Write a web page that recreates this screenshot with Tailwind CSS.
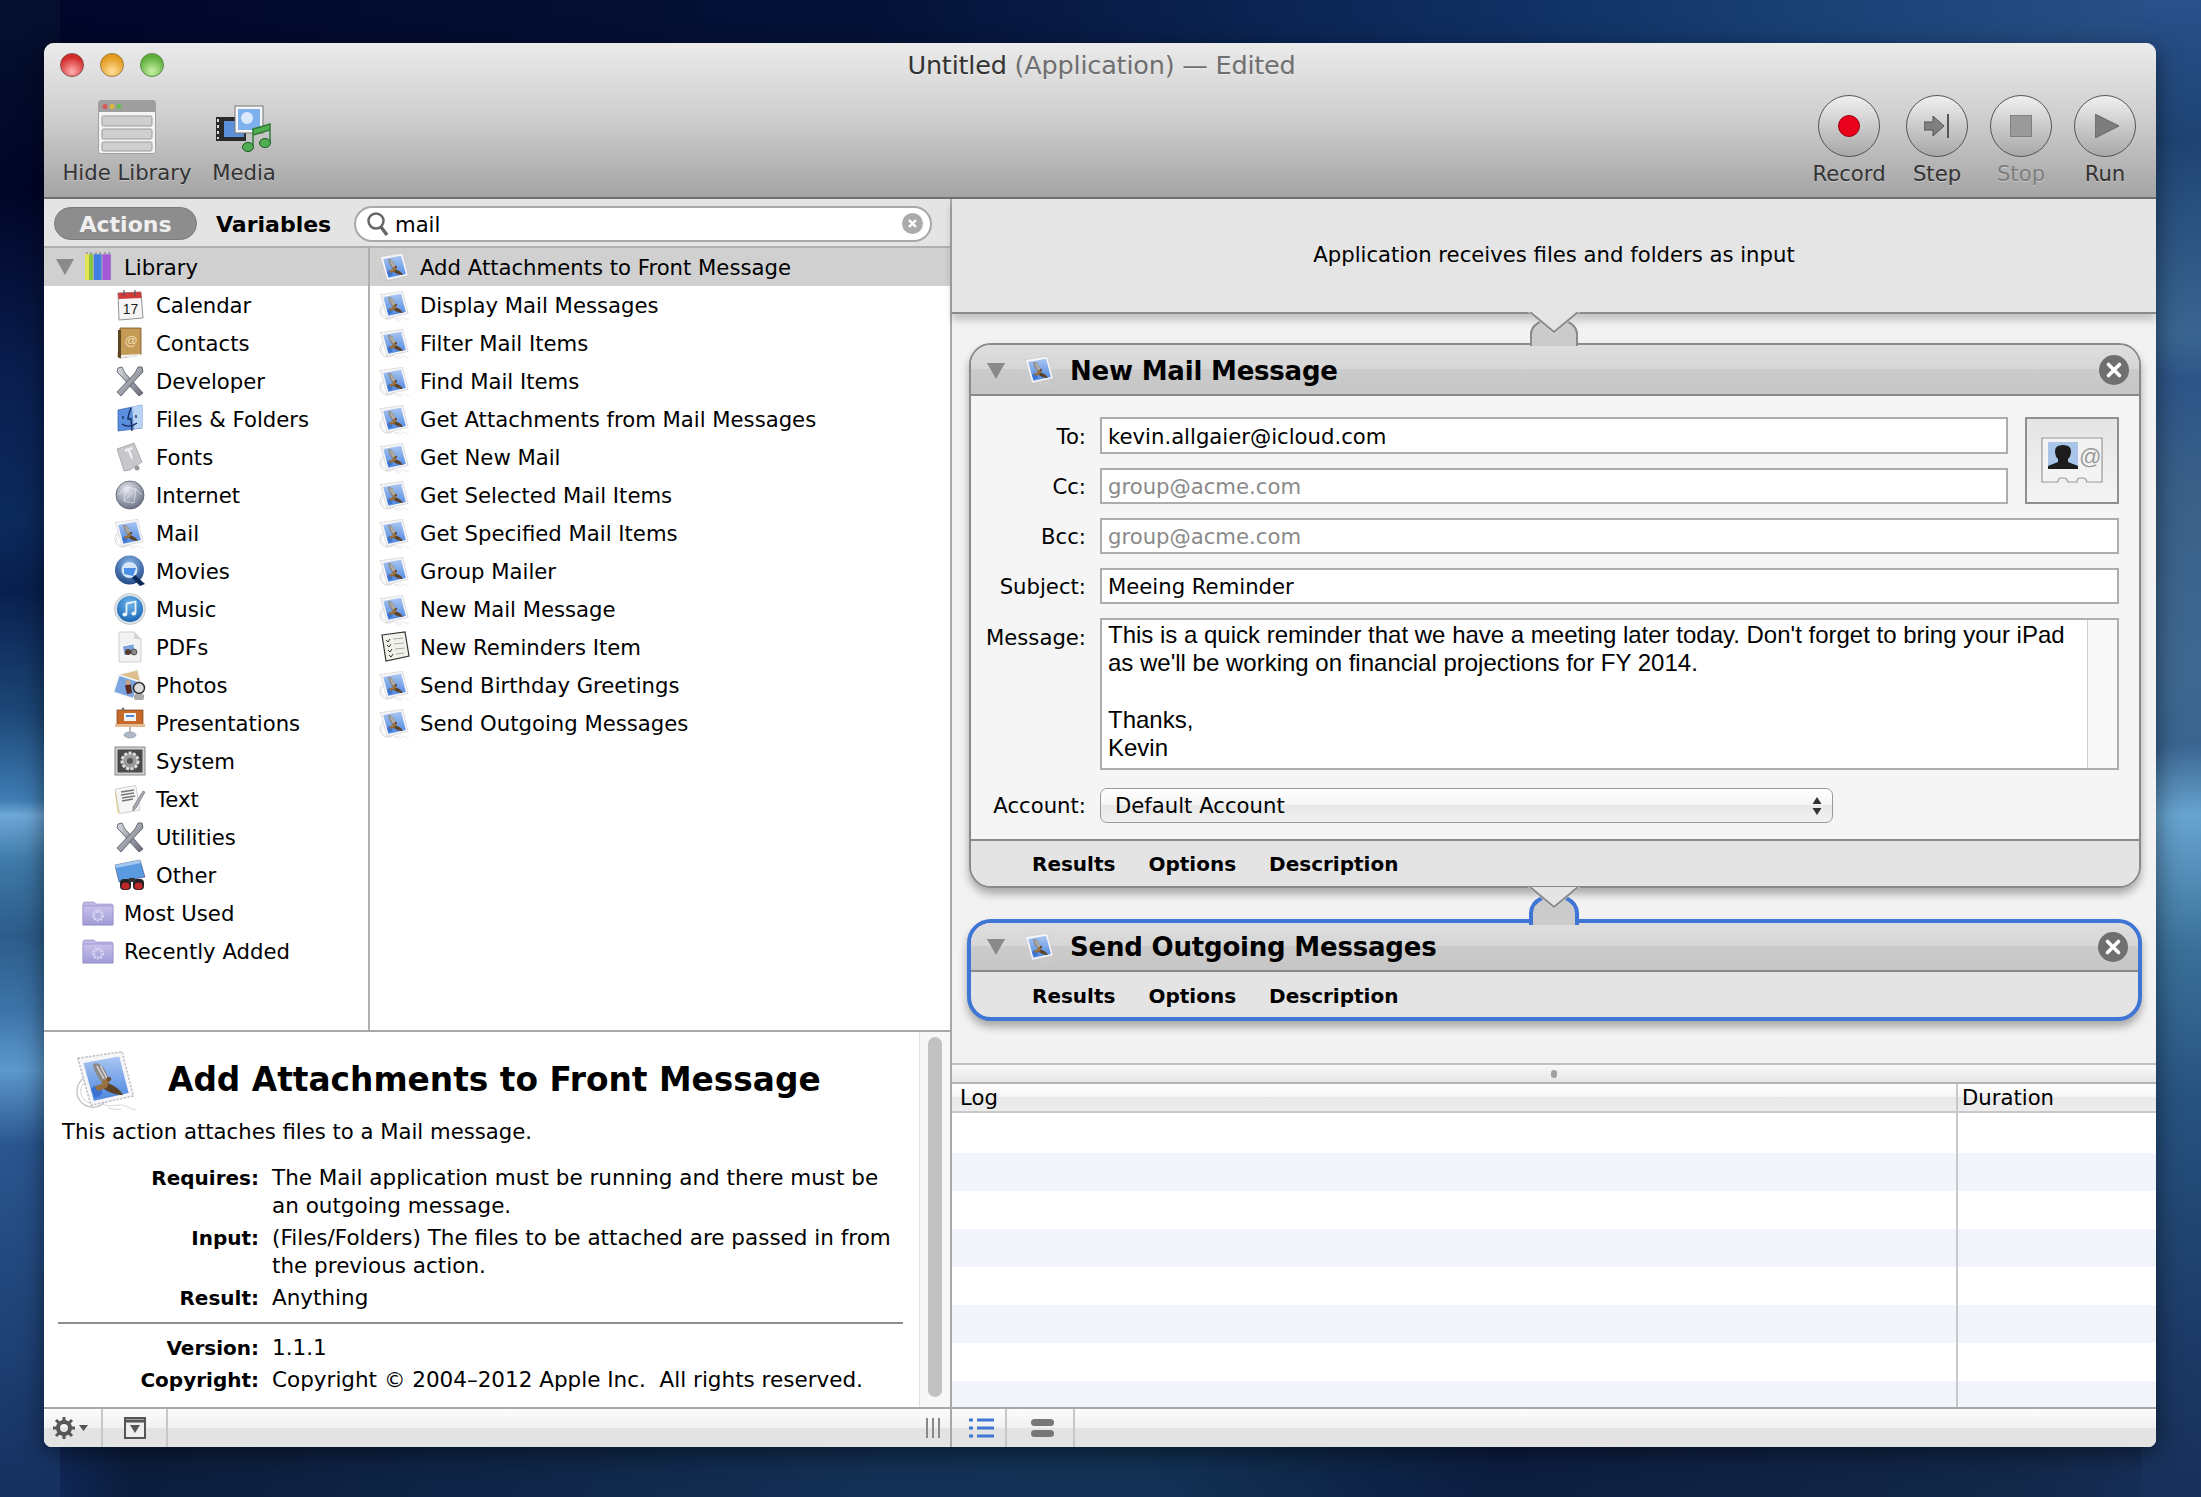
<!DOCTYPE html>
<html>
<head>
<meta charset="utf-8">
<script src="https://cdn.jsdelivr.net/npm/@tailwindcss/browser@4"></script>
</head>
<body class="m-0">
<svg class="absolute w-0 h-0" aria-hidden="true">
<defs>
<linearGradient id="gBlue" x1="0" y1="0" x2="0" y2="1"><stop offset="0" stop-color="#a9c6f2"/><stop offset="1" stop-color="#4d86e0"/></linearGradient>
<linearGradient id="gSilver" x1="0" y1="0" x2="1" y2="1"><stop offset="0" stop-color="#d8dadf"/><stop offset="1" stop-color="#666a75"/></linearGradient>
<linearGradient id="gPurple" x1="0" y1="0" x2="0" y2="1"><stop offset="0" stop-color="#c7c2ea"/><stop offset="1" stop-color="#a09ad6"/></linearGradient>
<radialGradient id="gGlobe" cx=".4" cy=".3" r=".8"><stop offset="0" stop-color="#e6e8f0"/><stop offset="1" stop-color="#5d6478"/></radialGradient>
<radialGradient id="gQ" cx=".5" cy=".3" r=".8"><stop offset="0" stop-color="#8bb7ec"/><stop offset="1" stop-color="#123a78"/></radialGradient>
<radialGradient id="gM" cx=".5" cy=".3" r=".8"><stop offset="0" stop-color="#6fb6ee"/><stop offset="1" stop-color="#0d5cab"/></radialGradient>
<symbol id="stamp" viewBox="5 3 68 68">
<circle cx="24" cy="50" r="17" fill="none" stroke="#c6c6c6" stroke-width="1.500"/>
<circle cx="24" cy="50" r="13" fill="none" stroke="#d2d2d2" stroke-width="1"/>
<path d="M8 15L55 8 67 55 22 65z" fill="#f6f6f8" stroke="#bdbdc4" stroke-width="1.600" stroke-dasharray="2.500 1.500"/>
<path d="M14 20L52 13 62 52 25 60z" fill="url(#gBlue)"/>
<path d="M22 48q4-6 9-3t2 9l-7 3z" fill="#3a72d4"/>
<path d="M24 21C30 18 36 24 39 32L42 40 35 43C29 36 25 28 24 21Z" fill="#8c8a88"/>
<path d="M28 23L37 39M32 23L39 36" stroke="#dcdad4" stroke-width="1.400"/>
<path d="M38 41C46 43 53 48 56 54 48 54 40 51 34 46Z" fill="#5b4226"/>
<path d="M35 37L42 38 39 46 29 50 26 45 34 42Z" fill="#96703f"/>
<circle cx="41" cy="37" r="2.500" fill="#6a5030"/>
<path d="M34 64q8 3 14 1t14 2 8 2M40 68q8 2 14 1" fill="none" stroke="#d4d4d4" stroke-width="1"/>
</symbol>
<symbol id="calendar" viewBox="0 0 32 32">
<path d="M4 4l23-1 2 26-24 2z" fill="#f5f5f5" stroke="#777" stroke-width=".8"/>
<path d="M4 4l23-1 .5 6-23 1z" fill="#cf3d3a"/>
<path d="M10 1v6M21 1v6" stroke="#555" stroke-width="1.200"/>
<text x="16.500" y="25" font-size="14" text-anchor="middle" font-family="Liberation Sans" fill="#222">17</text>
</symbol>
<symbol id="contacts" viewBox="0 0 32 32">
<path d="M6 1h21v27L6 31l-2-1z" fill="#c59a55" stroke="#6e5027" stroke-width=".8"/>
<path d="M4 3v27l3 1V3z" fill="#5f4520"/>
<path d="M7 28l20-1v2L7 31z" fill="#eee"/>
<text x="17" y="18" font-size="13" text-anchor="middle" font-family="Liberation Sans" fill="#f0dcae">@</text>
</symbol>
<symbol id="tools" viewBox="0 0 32 32">
<path d="M4 3l4-1 3 6 18 20-4 3L7 11 3 7z" fill="url(#gSilver)" stroke="#4f5260" stroke-width=".8"/>
<path d="M28 2l-4 0-3 6L3 27l4 4L25 11l4-4z" fill="url(#gSilver)" stroke="#4f5260" stroke-width=".8"/>
</symbol>
<symbol id="finder" viewBox="0 0 32 32">
<path d="M4 7l24-5v23l-24 3z" fill="#5a8fe0" stroke="#2c5ba8" stroke-width=".7"/>
<path d="M18 3.500l10-1.500v23l-8 1z" fill="#b9d3f5"/>
<path d="M17 5c-2 5-3 8-3 11h3l1 12M9 13v3M22 12v3M8 21c4 3 10 3 15-1" fill="none" stroke="#14274f" stroke-width="1.300"/>
</symbol>
<symbol id="fonts" viewBox="0 0 32 32">
<path d="M3 8l17-6 8 19-12 8-6 1z" fill="#c7c8cc" stroke="#9a9a9f" stroke-width=".7"/>
<path d="M11 8l7-2 1 2-3 1 3 8-2 1-3-8-3 1z" fill="#f1f1f1"/>
<circle cx="23" cy="27" r="2.500" fill="#999"/>
</symbol>
<symbol id="globe" viewBox="0 0 32 32">
<circle cx="16" cy="16" r="14" fill="url(#gGlobe)" stroke="#5a5f6d" stroke-width=".8"/>
<path d="M4 16l8-8 10 2 6 6M12 8l-2 14 12-12-2 14M10 22l10 2" stroke="#f0f1f5" stroke-width=".6" fill="none"/>
</symbol>
<symbol id="movies" viewBox="0 0 32 32">
<circle cx="15.500" cy="15" r="14.500" fill="url(#gQ)"/>
<circle cx="15.500" cy="15" r="8" fill="#d5e6fa"/>
<path d="M10 13h12l-3 8-9-2z" fill="#4a90e8"/>
<path d="M21 20l10 9-5 2-8-8z" fill="#0d2a5a"/>
</symbol>
<symbol id="music" viewBox="0 0 32 32">
<circle cx="16" cy="16" r="15.500" fill="#dfe3e8" stroke="#9aa" stroke-width=".5"/>
<circle cx="16" cy="16" r="13" fill="url(#gM)"/>
<path d="M12.500 10.500l9-2v11.500" fill="none" stroke="#e8f1f8" stroke-width="1.800"/>
<path d="M12.500 10.500v10.500" stroke="#e8f1f8" stroke-width="1.800"/>
<ellipse cx="10.800" cy="21.500" rx="2.400" ry="1.900" fill="#e8f1f8"/>
<ellipse cx="19.800" cy="20.500" rx="2.400" ry="1.900" fill="#e8f1f8"/>
</symbol>
<symbol id="pdf" viewBox="0 0 32 32">
<path d="M5 1h15l7 7v23H5z" fill="#f2f2f2" stroke="#bdbdbd" stroke-width=".7"/>
<path d="M20 1v7h7z" fill="#d5d5d5"/>
<rect x="9" y="14" width="12" height="10" transform="rotate(-12 14 19)" fill="#7ea5da" stroke="#fff"/>
<circle cx="14" cy="21" r="3" fill="#5a3a2a"/>
<circle cx="20" cy="21" r="3" fill="#888" stroke="#333" stroke-width=".7"/>
</symbol>
<symbol id="photos" viewBox="0 0 32 32">
<rect x="5" y="3" width="21" height="15" transform="rotate(-14 15 11)" fill="#dcc08f" stroke="#f5f5f5" stroke-width="1.500"/>
<rect x="2" y="9" width="21" height="18" transform="rotate(18 13 17)" fill="#7aa5e0" stroke="#f5f5f5" stroke-width="1.500"/>
<path d="M11 17l3-3 3 2 1 8-5 1z" fill="#5a2d20"/>
<circle cx="14" cy="13.500" r="2.500" fill="#d1a084"/>
<circle cx="25" cy="19" r="5.500" fill="#ddd" stroke="#333" stroke-width="1.500"/>
<rect x="20" y="25" width="10" height="6" rx="2" fill="#aaa"/>
</symbol>
<symbol id="keynote" viewBox="0 0 32 32">
<rect x="3" y="3" width="26" height="15" fill="#c8692c" stroke="#7d3c12" stroke-width=".7"/>
<rect x="1" y="17" width="30" height="3" fill="#e2bb93"/>
<rect x="10" y="6" width="12" height="8" fill="#f2f2f2"/>
<rect x="12" y="8" width="8" height="2" fill="#4a88d8"/>
<rect x="15" y="20" width="2" height="7" fill="#bbb"/>
<ellipse cx="16" cy="28" rx="6" ry="3" fill="#aeb8cc" stroke="#777" stroke-width=".5"/>
<circle cx="9" cy="2" r="1.500" fill="#777"/>
</symbol>
<symbol id="system" viewBox="0 0 32 32">
<rect x="1" y="2" width="30" height="28" fill="#d0d0d0" stroke="#8a8a8a"/>
<rect x="3.500" y="4.500" width="25" height="23" fill="#4a4a4a"/>
<circle cx="16" cy="16" r="8" fill="#9a9a9a" stroke="#dcdcdc" stroke-width="3" stroke-dasharray="3 1.500"/>
<circle cx="16" cy="16" r="3" fill="#555"/>
</symbol>
<symbol id="textdoc" viewBox="0 0 32 32">
<rect x="2" y="8" width="18" height="21" transform="rotate(-8 12 18)" fill="#e8d98a"/>
<rect x="3" y="4" width="21" height="25" transform="rotate(-10 14 16)" fill="#f5f5f5" stroke="#bbb" stroke-width=".6"/>
<path d="M7 9l13-2M7 12l13-2M8 15l13-2M8 18l11-2" stroke="#777" stroke-width="1.500"/>
<path d="M29 8l2 1-9 16-3 3 0-4z" fill="#a8abb3" stroke="#555" stroke-width=".5"/>
</symbol>
<symbol id="binoc" viewBox="0 0 32 32">
<path d="M1 6l25-5 5 17-26 5z" fill="#5a9ae0" stroke="#336" stroke-width=".5"/>
<path d="M1 6l25-5 .8 3L2 9z" fill="#a3c8ee"/>
<rect x="6" y="20" width="11" height="11" rx="4" fill="#222"/>
<rect x="19" y="20" width="11" height="11" rx="4" fill="#222"/>
<ellipse cx="11.500" cy="27" rx="4" ry="3.500" fill="#c02828"/>
<ellipse cx="24.500" cy="27" rx="4" ry="3.500" fill="#c02828"/>
<rect x="15" y="19" width="6" height="4" fill="#333"/>
</symbol>
<symbol id="folder" viewBox="0 0 32 32">
<path d="M1 7q0-2 2-2h9l2 2h15q2 0 2 2v19H1z" fill="#bfb9e6" stroke="#8b85c2" stroke-width=".6"/>
<rect x="1" y="9" width="30" height="19" fill="url(#gPurple)" stroke="#8b85c2" stroke-width=".6"/>
<circle cx="16" cy="18.500" r="4.500" fill="none" stroke="#d7d4f2" stroke-width="3" stroke-dasharray="2 1"/>
</symbol>
<symbol id="books" viewBox="0 0 32 32">
<rect x="2" y="3" width="8.500" height="27" fill="#8cc63f" stroke="#bcbcbc" stroke-width=".6"/>
<rect x="2" y="3" width="4" height="27" fill="#e3e35a"/>
<rect x="10.500" y="3" width="8.500" height="27" fill="#3e7fe0" stroke="#bcbcbc" stroke-width=".6"/>
<rect x="19" y="3" width="9" height="27" fill="#a45ad8" stroke="#bcbcbc" stroke-width=".6"/>
<path d="M4 3V1M8 3V1M13 3V1M17 3V1M22 3V1M26 3V1" stroke="#777" stroke-width="1"/>
<rect x="1" y="29" width="29" height="2" fill="#d0d0d0"/>
</symbol>
<symbol id="remind" viewBox="0 0 32 32">
<path d="M3 4l23-3 4 24-23 5z" fill="#f3f2ea" stroke="#333" stroke-width="1.200"/>
<path d="M7 9l2 2 2-3M8 14l2 2 2-3M9 19l2 2 2-3M10 24l2 2 2-3" fill="none" stroke="#333" stroke-width="1"/>
<path d="M14 8l10-1M15 13l10-1M16 18l10-1M17 23l8-1" stroke="#aaa" stroke-width="1"/>
</symbol>
<symbol id="xdark" viewBox="0 0 30 30">
<circle cx="15" cy="15" r="15" fill="#6f6f6f"/>
<path d="M9.500 9.500l11 11M20.500 9.500l-11 11" stroke="#fff" stroke-width="3.600" stroke-linecap="round"/>
</symbol>
<symbol id="tri" viewBox="0 0 18 16"><path d="M0 0h18L9 16z" fill="#8a8a8a"/></symbol>
</defs>
</svg>

<div class="relative w-[2201px] h-[1497px] overflow-hidden pt-[43px] pl-[44px] font-['DejaVu_Sans',sans-serif] text-[21.200px] text-black bg-[#0d2244]">
<!-- desktop wallpaper -->
<div class="absolute left-0 right-0 top-0 h-[60px] bg-[linear-gradient(to_right,#01062a_0%,#051238_40%,#0f2f62_68%,#1c4478_85%,#2a5288_100%)]"></div>
<div class="absolute left-0 right-0 bottom-0 h-[60px] bg-[linear-gradient(to_right,#12306a_0%,#0c1c3c_6%,#133055_40%,#123255_52%,#0c1d40_68%,#13284a_92%,#17305c_100%)]"></div>
<div class="absolute left-0 top-0 bottom-0 w-[60px] bg-[linear-gradient(#05102f_0,#010528_190px,#0a1f50_380px,#0c2a5c_520px,#081f4e_590px,#1d4878_715px,#3f7db4_800px,#6fa8d8_815px,#3f7aa8_860px,#2c5c8a_935px,#3d74a8_1010px,#5c98cc_1070px,#2a568f_1145px,#15305f_1497px)]"></div>
<div class="absolute right-0 top-0 bottom-0 w-[60px] bg-[linear-gradient(#28508a_0,#1f4474_140px,#3a6590_335px,#2e5588_380px,#3a6088_495px,#3f6890_670px,#3a6590_745px,#68a4d0_815px,#3a7098_950px,#27527f_1100px,#1c3a66_1340px,#17305a_1497px)]"></div>

<div class="relative w-[2112px] h-[1404px] flex flex-col rounded-t-[10px] rounded-b-[8px] overflow-hidden shadow-[0_6px_24px_rgba(0,0,0,0.5)] bg-[#e4e4e4]">

<!-- toolbar -->
<div class="h-[156px] shrink-0 flex flex-col bg-linear-to-b from-[#ebebeb] via-[#cdcdcd] to-[#a4a4a4] border-b-[2px] border-[#6e6e6e] text-[#333] [text-shadow:0_1px_0_rgba(255,255,255,0.35)]">
 <div class="grid grid-cols-[1fr_auto_1fr] items-center h-[44px]">
  <div class="flex gap-[16px] pl-[16px]">
   <span class="w-[24px] h-[24px] rounded-full border border-[#8c4a4a] bg-[radial-gradient(circle_at_50%_80%,#ffb0b0,#d42a2a_70%)]"></span>
   <span class="w-[24px] h-[24px] rounded-full border border-[#9c7b3a] bg-[radial-gradient(circle_at_50%_80%,#ffe09a,#e39a1e_70%)]"></span>
   <span class="w-[24px] h-[24px] rounded-full border border-[#5a8a4a] bg-[radial-gradient(circle_at_50%_80%,#c9f2a8,#5fae3a_70%)]"></span>
  </div>
  <div class="ml-[3px] text-[25.500px] tracking-[-0.2px] whitespace-nowrap text-[#333]">Untitled <span class="text-[#6f6f6f]">(Application) — Edited</span></div>
  <div></div>
 </div>
 <div class="flex-1 flex justify-between pl-[18px] pr-[20px]">
  <div class="flex gap-[20px]">
   <div class="w-[130px] flex flex-col items-center">
    <svg class="w-[58px] h-[54px] mt-[13px]" viewBox="0 0 58 54">
     <rect x=".5" y=".5" width="57" height="53" rx="2" fill="#f4f4f4" stroke="#a0a0a0"/>
     <rect x="1" y="1" width="56" height="11" fill="#9e9e9e"/>
     <circle cx="7" cy="6.500" r="2.500" fill="#d55"/><circle cx="14" cy="6.500" r="2.500" fill="#db3"/><circle cx="21" cy="6.500" r="2.500" fill="#6b5"/>
     <rect x="4" y="16" width="50" height="10" rx="1.500" fill="#cfcfcf" stroke="#999"/>
     <rect x="4" y="29" width="50" height="10" rx="1.500" fill="#cfcfcf" stroke="#999"/>
     <rect x="4" y="42" width="50" height="9" rx="1.500" fill="#cfcfcf" stroke="#999"/>
    </svg>
    <span class="mt-[3px] whitespace-nowrap">Hide Library</span>
   </div>
   <div class="w-[64px] flex flex-col items-center">
    <svg class="w-[58px] h-[48px] mt-[18px]" viewBox="0 0 58 48">
     <rect x="1" y="12" width="30" height="24" fill="#2a2a2a"/>
     <path d="M3 14v3M3 20v3M3 26v3M3 32v2" stroke="#ddd" stroke-width="2"/>
     <rect x="9" y="16" width="20" height="16" fill="#5c8fd8"/>
     <rect x="20" y="1" width="28" height="27" fill="#f5f5f5" stroke="#777"/>
     <rect x="23" y="4" width="22" height="21" fill="#7fb0ee"/>
     <circle cx="32" cy="13" r="6" fill="#d9e9fb"/>
     <path d="M38 24v18M55 20v18M38 24l17-5v6l-17 5z" fill="#4fae52" stroke="#2f7a35" stroke-width="1.500"/>
     <ellipse cx="33" cy="42" rx="5.500" ry="4.500" fill="#4fae52" stroke="#1f5a25"/>
     <ellipse cx="50" cy="38" rx="5.500" ry="4.500" fill="#4fae52" stroke="#1f5a25"/>
    </svg>
    <span class="mt-[4px] whitespace-nowrap">Media</span>
   </div>
  </div>
  <div class="flex gap-[22px]">
   <div class="w-[62px] flex flex-col items-center mr-[4px]">
    <div class="w-[62px] h-[62px] mt-[8px] rounded-full border border-[#555] bg-linear-to-b from-[#f0f0f0] to-[#a8a8a8] flex items-center justify-center">
     <span class="w-[22px] h-[22px] rounded-full bg-[#e8001c] border border-[#9a0010]"></span>
    </div>
    <span class="mt-[1px] whitespace-nowrap">Record</span>
   </div>
   <div class="w-[62px] flex flex-col items-center">
    <div class="w-[62px] h-[62px] mt-[8px] rounded-full border border-[#555] bg-linear-to-b from-[#f0f0f0] to-[#a8a8a8] flex items-center justify-center">
     <svg class="w-[26px] h-[24px]" viewBox="0 0 26 24"><path d="M0 8h9V2l11 10-11 10v-6H0z" fill="#808080" stroke="#555"/><rect x="23" y="0" width="2" height="24" fill="#555"/></svg>
    </div>
    <span class="mt-[1px] whitespace-nowrap">Step</span>
   </div>
   <div class="w-[62px] flex flex-col items-center">
    <div class="w-[62px] h-[62px] mt-[8px] rounded-full border border-[#555] bg-linear-to-b from-[#f0f0f0] to-[#a8a8a8] flex items-center justify-center">
     <span class="w-[22px] h-[22px] bg-[#9a9a9a] border border-[#808080]"></span>
    </div>
    <span class="mt-[1px] whitespace-nowrap text-[#7e7e7e]">Stop</span>
   </div>
   <div class="w-[62px] flex flex-col items-center">
    <div class="w-[62px] h-[62px] mt-[8px] rounded-full border border-[#555] bg-linear-to-b from-[#f0f0f0] to-[#a8a8a8] flex items-center justify-center">
     <svg class="w-[24px] h-[24px] ml-[3px]" viewBox="0 0 24 24"><path d="M0 0l24 12L0 24z" fill="#7d7d7d" stroke="#666"/></svg>
    </div>
    <span class="mt-[1px] whitespace-nowrap">Run</span>
   </div>
  </div>
 </div>
</div>

<!-- main -->
<div class="flex-1 flex min-h-0">

<!-- left pane -->
<div class="w-[908px] shrink-0 flex flex-col bg-white border-r-[2px] border-[#a8a8a8]">
 <div class="h-[49px] shrink-0 flex items-center bg-[#e4e4e4] border-b-[2px] border-[#b0b0b0] pl-[10px] pr-[18px] pt-[2px]">
  <div class="w-[143px] h-[33px] rounded-full bg-[#8d8d8d] border border-[#7a7a7a] flex items-center justify-center text-[#efefef] font-bold text-[22px] pt-[1px]">Actions</div>
  <div class="ml-[19px] w-[120px] font-bold text-[22px] whitespace-nowrap pt-[2px]">Variables</div>
  <div class="ml-[18px] flex-1 h-[36px] rounded-full border-[2px] border-[#a9a9a9] bg-white flex items-center pl-[10px] pr-[7px]">
   <svg class="w-[24px] h-[26px]" viewBox="0 0 24 26"><circle cx="10" cy="10" r="7.500" fill="none" stroke="#666" stroke-width="2.500"/><path d="M15 16l6 8" stroke="#666" stroke-width="3.500"/></svg>
   <span class="ml-[5px] flex-1 pt-[2px]">mail</span>
   <svg class="w-[21px] h-[21px]" viewBox="0 0 30 30"><circle cx="15" cy="15" r="15" fill="#ababab"/><path d="M10 10l10 10M20 10L10 20" stroke="#fff" stroke-width="3.500"/></svg>
  </div>
 </div>
 <div class="flex-1 flex min-h-0">
  <!-- library list -->
  <div class="w-[326px] shrink-0 border-r-[2px] border-[#b0b0b0]">
   <div class="h-[38px] bg-[#d0d0d0] flex items-center pl-[12px]">
    <svg class="w-[18px] h-[16px]"><use href="#tri"/></svg>
    <svg class="w-[32px] h-[32px] ml-[9px]"><use href="#books"/></svg>
    <span class="ml-[9px] pt-[2px]">Library</span>
   </div>
   <div class="h-[38px] flex items-center pl-[70px]"><svg class="w-[32px] h-[32px]"><use href="#calendar"/></svg><span class="ml-[10px] pt-[2px]">Calendar</span></div>
   <div class="h-[38px] flex items-center pl-[70px]"><svg class="w-[32px] h-[32px]"><use href="#contacts"/></svg><span class="ml-[10px] pt-[2px]">Contacts</span></div>
   <div class="h-[38px] flex items-center pl-[70px]"><svg class="w-[32px] h-[32px]"><use href="#tools"/></svg><span class="ml-[10px] pt-[2px]">Developer</span></div>
   <div class="h-[38px] flex items-center pl-[70px]"><svg class="w-[32px] h-[32px]"><use href="#finder"/></svg><span class="ml-[10px] pt-[2px]">Files &amp; Folders</span></div>
   <div class="h-[38px] flex items-center pl-[70px]"><svg class="w-[32px] h-[32px]"><use href="#fonts"/></svg><span class="ml-[10px] pt-[2px]">Fonts</span></div>
   <div class="h-[38px] flex items-center pl-[70px]"><svg class="w-[32px] h-[32px]"><use href="#globe"/></svg><span class="ml-[10px] pt-[2px]">Internet</span></div>
   <div class="h-[38px] flex items-center pl-[70px]"><svg class="w-[32px] h-[32px]"><use href="#stamp"/></svg><span class="ml-[10px] pt-[2px]">Mail</span></div>
   <div class="h-[38px] flex items-center pl-[70px]"><svg class="w-[32px] h-[32px]"><use href="#movies"/></svg><span class="ml-[10px] pt-[2px]">Movies</span></div>
   <div class="h-[38px] flex items-center pl-[70px]"><svg class="w-[32px] h-[32px]"><use href="#music"/></svg><span class="ml-[10px] pt-[2px]">Music</span></div>
   <div class="h-[38px] flex items-center pl-[70px]"><svg class="w-[32px] h-[32px]"><use href="#pdf"/></svg><span class="ml-[10px] pt-[2px]">PDFs</span></div>
   <div class="h-[38px] flex items-center pl-[70px]"><svg class="w-[32px] h-[32px]"><use href="#photos"/></svg><span class="ml-[10px] pt-[2px]">Photos</span></div>
   <div class="h-[38px] flex items-center pl-[70px]"><svg class="w-[32px] h-[32px]"><use href="#keynote"/></svg><span class="ml-[10px] pt-[2px]">Presentations</span></div>
   <div class="h-[38px] flex items-center pl-[70px]"><svg class="w-[32px] h-[32px]"><use href="#system"/></svg><span class="ml-[10px] pt-[2px]">System</span></div>
   <div class="h-[38px] flex items-center pl-[70px]"><svg class="w-[32px] h-[32px]"><use href="#textdoc"/></svg><span class="ml-[10px] pt-[2px]">Text</span></div>
   <div class="h-[38px] flex items-center pl-[70px]"><svg class="w-[32px] h-[32px]"><use href="#tools"/></svg><span class="ml-[10px] pt-[2px]">Utilities</span></div>
   <div class="h-[38px] flex items-center pl-[70px]"><svg class="w-[32px] h-[32px]"><use href="#binoc"/></svg><span class="ml-[10px] pt-[2px]">Other</span></div>
   <div class="h-[38px] flex items-center pl-[38px]"><svg class="w-[32px] h-[32px]"><use href="#folder"/></svg><span class="ml-[10px] pt-[2px]">Most Used</span></div>
   <div class="h-[38px] flex items-center pl-[38px]"><svg class="w-[32px] h-[32px]"><use href="#folder"/></svg><span class="ml-[10px] pt-[2px]">Recently Added</span></div>
  </div>
  <!-- action list -->
  <div class="flex-1">
   <div class="h-[38px] bg-[#d0d0d0] flex items-center pl-[9px]"><svg class="w-[32px] h-[32px]"><use href="#stamp"/></svg><span class="ml-[9px] pt-[2px]">Add Attachments to Front Message</span></div>
   <div class="h-[38px] flex items-center pl-[9px]"><svg class="w-[32px] h-[32px]"><use href="#stamp"/></svg><span class="ml-[9px] pt-[2px]">Display Mail Messages</span></div>
   <div class="h-[38px] flex items-center pl-[9px]"><svg class="w-[32px] h-[32px]"><use href="#stamp"/></svg><span class="ml-[9px] pt-[2px]">Filter Mail Items</span></div>
   <div class="h-[38px] flex items-center pl-[9px]"><svg class="w-[32px] h-[32px]"><use href="#stamp"/></svg><span class="ml-[9px] pt-[2px]">Find Mail Items</span></div>
   <div class="h-[38px] flex items-center pl-[9px]"><svg class="w-[32px] h-[32px]"><use href="#stamp"/></svg><span class="ml-[9px] pt-[2px]">Get Attachments from Mail Messages</span></div>
   <div class="h-[38px] flex items-center pl-[9px]"><svg class="w-[32px] h-[32px]"><use href="#stamp"/></svg><span class="ml-[9px] pt-[2px]">Get New Mail</span></div>
   <div class="h-[38px] flex items-center pl-[9px]"><svg class="w-[32px] h-[32px]"><use href="#stamp"/></svg><span class="ml-[9px] pt-[2px]">Get Selected Mail Items</span></div>
   <div class="h-[38px] flex items-center pl-[9px]"><svg class="w-[32px] h-[32px]"><use href="#stamp"/></svg><span class="ml-[9px] pt-[2px]">Get Specified Mail Items</span></div>
   <div class="h-[38px] flex items-center pl-[9px]"><svg class="w-[32px] h-[32px]"><use href="#stamp"/></svg><span class="ml-[9px] pt-[2px]">Group Mailer</span></div>
   <div class="h-[38px] flex items-center pl-[9px]"><svg class="w-[32px] h-[32px]"><use href="#stamp"/></svg><span class="ml-[9px] pt-[2px]">New Mail Message</span></div>
   <div class="h-[38px] flex items-center pl-[9px]"><svg class="w-[32px] h-[32px]"><use href="#remind"/></svg><span class="ml-[9px] pt-[2px]">New Reminders Item</span></div>
   <div class="h-[38px] flex items-center pl-[9px]"><svg class="w-[32px] h-[32px]"><use href="#stamp"/></svg><span class="ml-[9px] pt-[2px]">Send Birthday Greetings</span></div>
   <div class="h-[38px] flex items-center pl-[9px]"><svg class="w-[32px] h-[32px]"><use href="#stamp"/></svg><span class="ml-[9px] pt-[2px]">Send Outgoing Messages</span></div>
  </div>
 </div>
 <!-- description -->
 <div class="h-[377px] shrink-0 flex border-t-[2px] border-[#a8a8a8]">
  <div class="flex-1 pl-[14px] pr-[16px] pt-[16px]">
   <div class="flex items-center h-[62px]">
    <svg class="w-[64px] h-[64px] ml-[17px]"><use href="#stamp"/></svg>
    <span class="ml-[29px] pt-[3px] font-bold text-[32.800px] whitespace-nowrap">Add Attachments to Front Message</span>
   </div>
   <div class="ml-[4px] mt-[8px] leading-[28px]">This action attaches files to a Mail message.</div>
   <div class="grid grid-cols-[201px_1fr] gap-x-[13px] gap-y-[4px] mt-[18px] leading-[28px] text-[21.500px]">
    <div class="text-right font-bold text-[20px]">Requires:</div><div>The Mail application must be running and there must be<br>an outgoing message.</div>
    <div class="text-right font-bold text-[20px]">Input:</div><div class="whitespace-nowrap">(Files/Folders) The files to be attached are passed in from<br>the previous action.</div>
    <div class="text-right font-bold text-[20px]">Result:</div><div>Anything</div>
   </div>
   <div class="h-[2px] bg-[#8e8e8e] mt-[10px] mb-[10px]"></div>
   <div class="grid grid-cols-[201px_1fr] gap-x-[13px] gap-y-[4px] leading-[28px] text-[21.500px]">
    <div class="text-right font-bold text-[20px]">Version:</div><div>1.1.1</div>
    <div class="text-right font-bold text-[20px]">Copyright:</div><div class="whitespace-pre">Copyright © 2004–2012 Apple Inc.  All rights reserved.</div>
   </div>
  </div>
  <div class="w-[31px] shrink-0 bg-[#f7f7f7] border-l border-[#e0e0e0] pl-[8px] pt-[5px] pb-[10px]">
   <div class="w-[14px] h-full rounded-full bg-[#c2c2c2]"></div>
  </div>
 </div>
 <!-- bottom left bar -->
 <div class="h-[40px] shrink-0 flex items-stretch border-t-[2px] border-[#a8a8a8] bg-[linear-gradient(#fcfcfc,#f0f0f0_50%,#e3e3e3_50%,#e3e3e3)]">
  <div class="w-[59px] flex items-center pl-[9px] border-r-[2px] border-[#c8c8c8]">
   <svg class="w-[22px] h-[22px]" viewBox="0 0 22 22"><circle cx="11" cy="11" r="6" fill="none" stroke="#555" stroke-width="4"/><path d="M11 0v5M11 17v5M0 11h5M17 11h5M3 3l4 4M15 15l4 4M19 3l-4 4M3 19l4-4" stroke="#555" stroke-width="3"/></svg>
   <svg class="w-[9px] h-[6px] ml-[4px]" viewBox="0 0 9 6"><path d="M0 0h9L4.500 6z" fill="#555"/></svg>
  </div>
  <div class="w-[65px] flex items-center justify-center border-r-[2px] border-[#c8c8c8]">
   <svg class="w-[22px] h-[22px]" viewBox="0 0 22 22"><rect x="1" y="1" width="20" height="20" fill="#eee" stroke="#555" stroke-width="2"/><path d="M1 4h20" stroke="#555" stroke-width="3"/><path d="M6 8h10l-5 8z" fill="#555"/></svg>
  </div>
  <div class="flex-1 flex items-center justify-end pr-[9px]">
   <svg class="w-[16px] h-[20px]" viewBox="0 0 16 20"><path d="M2 0v20M8 0v20M14 0v20" stroke="#888" stroke-width="2"/></svg>
  </div>
 </div>
</div>

<!-- right pane -->
<div class="flex-1 flex flex-col min-w-0 bg-[#f2f2f2]">
 <div class="relative flex-1 min-h-0 flex flex-col">
  <div class="h-[115px] shrink-0 bg-[#e5e5e5] border-b-[2px] border-[#8a8a8a] shadow-[0_6px_8px_rgba(0,0,0,0.2)] flex items-center justify-center pb-[2px]">Application receives files and folders as input</div>

  <!-- New Mail Message card -->
  <div class="relative mt-[29px] ml-[17px] mr-[15px] h-[545px] shrink-0 flex flex-col rounded-[22px] border-[2px] border-[#8a8a8a] shadow-[0_6px_8px_rgba(0,0,0,0.3)] bg-[#f5f5f5]">
   <svg class="absolute left-[557px] top-[-33px] w-[52px] h-[34px]" viewBox="0 0 52 34">
    <path d="M3 34V22C3 16 8 11 14 9H38C44 11 49 16 49 22V34z" fill="#cbcbcb"/>
    <path d="M3 34V22C3 16 8 11 14 9M38 9C44 11 49 16 49 22V34" fill="none" stroke="#8a8a8a" stroke-width="2"/>
    <path d="M0 0L26 22 52 0z" fill="#e5e5e5"/>
    <path d="M2 0L26 20 50 0" fill="none" stroke="#8a8a8a" stroke-width="2"/>
   </svg>
   <div class="h-[51px] shrink-0 flex items-center rounded-t-[20px] bg-[linear-gradient(#dedede,#d6d6d6_50%,#cbcbcb_50%,#c6c6c6)] border-b-[2px] border-[#8a8a8a] pl-[16px] pr-[10px]">
    <svg class="w-[18px] h-[16px] mt-[2px]"><use href="#tri"/></svg>
    <svg class="w-[32px] h-[32px] ml-[19px]"><use href="#stamp"/></svg>
    <span class="ml-[14px] pt-[4px] font-bold text-[26px] flex-1 tracking-[-0.2px] whitespace-nowrap">New Mail Message</span>
    <svg class="w-[30px] h-[30px]"><use href="#xdark"/></svg>
   </div>
   <div class="flex-1 pl-[14px] pr-[20px] pt-[21px] flex flex-col">
    <div class="flex gap-[17px]">
     <div class="flex-1 flex flex-col gap-[14px]">
      <div class="flex items-center gap-[14px]"><div class="w-[101px] text-right pt-[2px]">To:</div><div class="flex-1 h-[37px] bg-white border-[2px] border-[#adadad] flex items-center pl-[6px] pt-[2px]">kevin.allgaier@icloud.com</div></div>
      <div class="flex items-center gap-[14px]"><div class="w-[101px] text-right pt-[2px]">Cc:</div><div class="flex-1 h-[36px] bg-white border-[2px] border-[#adadad] flex items-center pl-[6px] pt-[2px] text-[#8a8a8a]">group@acme.com</div></div>
     </div>
     <div class="w-[94px] h-[87px] border-[2px] border-[#8f8f8f] bg-linear-to-b from-[#e4e4e4] to-[#f4f4f4] flex items-center justify-center">
      <svg class="w-[62px] h-[48px]" viewBox="0 0 62 48">
       <path d="M1 1h60v44H46q-1-4-4-4h-3q-3 0-3 4H27q-1-4-4-4h-3q-3 0-3 4H1z" fill="#f3f3f3" stroke="#9a9a9a" stroke-width="1.200"/>
       <rect x="7" y="5" width="30" height="27" fill="#a9c5ea"/>
       <path d="M7 32v-3l10-4v-3q-3-3-3-8 0-6 8-6t8 6q0 5-3 8v3l10 4v3z" fill="#1c1c1c"/>
       <text x="49" y="27" font-size="22" font-style="italic" text-anchor="middle" font-family="Liberation Sans" fill="#9a9a9a">@</text>
      </svg>
     </div>
    </div>
    <div class="flex items-center gap-[14px] mt-[14px]"><div class="w-[101px] text-right pt-[2px]">Bcc:</div><div class="flex-1 h-[36px] bg-white border-[2px] border-[#adadad] flex items-center pl-[6px] pt-[2px] text-[#8a8a8a]">group@acme.com</div></div>
    <div class="flex items-center gap-[14px] mt-[14px]"><div class="w-[101px] text-right pt-[2px]">Subject:</div><div class="flex-1 h-[36px] bg-white border-[2px] border-[#adadad] flex items-center pl-[6px] pt-[2px]">Meeing Reminder</div></div>
    <div class="flex gap-[14px] mt-[14px]">
     <div class="w-[101px] text-right pt-[4px]">Message:</div>
     <div class="flex-1 h-[152px] bg-white border-[2px] border-[#adadad] flex font-['Liberation_Sans',sans-serif] text-[24px] leading-[28.200px]">
      <div class="flex-1 pl-[6px] pt-[1px]">This is a quick reminder that we have a meeting later today. Don't forget to bring your iPad<br>as we'll be working on financial projections for FY 2014.<br><br>Thanks,<br>Kevin</div>
      <div class="w-[30px] shrink-0 bg-[#f8f8f8] border-l border-[#d0d0d0]"></div>
     </div>
    </div>
    <div class="flex items-center gap-[14px] mt-[18px]">
     <div class="w-[101px] text-right">Account:</div>
     <div class="w-[733px] h-[35px] rounded-[7px] border border-[#9a9a9a] bg-[linear-gradient(#ffffff,#f5f5f5_50%,#e8e8e8_50%,#f0f0f0)] flex items-center justify-between pl-[14px] pr-[10px]">
      <span>Default Account</span>
      <svg class="w-[10px] h-[18px]" viewBox="0 0 10 18"><path d="M5 0l4.500 7h-9zM5 18l4.500-7h-9z" fill="#333"/></svg>
     </div>
    </div>
   </div>
   <div class="h-[47px] shrink-0 rounded-b-[20px] bg-[#e4e4e4] border-t-[2px] border-[#8a8a8a] flex items-center pl-[61px] gap-[33px] font-bold text-[20px]">
    <span>Results</span><span>Options</span><span>Description</span>
   </div>
  </div>

  <!-- Send Outgoing Messages card -->
  <div class="relative mt-[31px] ml-[15px] mr-[14px] h-[102px] shrink-0 flex flex-col rounded-[24px] border-[4px] border-[#3f76d6] shadow-[0_6px_8px_rgba(0,0,0,0.3)] bg-[#e4e4e4]">
   <svg class="absolute left-[557px] top-[-36px] w-[52px] h-[38px]" viewBox="0 0 52 38">
    <path d="M3 38V26C3 19 8 14 14 11H38C44 14 49 19 49 26V38z" fill="#cbcbcb"/>
    <path d="M3 38V26C3 19 8 14 14 11M38 11C44 14 49 19 49 26V38" fill="none" stroke="#3f76d6" stroke-width="4"/>
    <path d="M0 0L26 22 52 0z" fill="#e4e4e4"/>
    <path d="M2 0L26 20 50 0" fill="none" stroke="#8a8a8a" stroke-width="2"/>
   </svg>
   <div class="h-[49px] shrink-0 flex items-center rounded-t-[20px] bg-[linear-gradient(#dedede,#d6d6d6_50%,#cbcbcb_50%,#c6c6c6)] border-b-[2px] border-[#8a8a8a] pl-[16px] pr-[10px]">
    <svg class="w-[18px] h-[16px] mt-[1px]"><use href="#tri"/></svg>
    <svg class="w-[32px] h-[32px] ml-[19px]"><use href="#stamp"/></svg>
    <span class="ml-[14px] pt-[2px] font-bold text-[26px] flex-1 tracking-[-0.2px] whitespace-nowrap">Send Outgoing Messages</span>
    <svg class="w-[30px] h-[30px]"><use href="#xdark"/></svg>
   </div>
   <div class="flex-1 flex items-center pl-[61px] gap-[33px] font-bold text-[20px] pt-[2px]">
    <span>Results</span><span>Options</span><span>Description</span>
   </div>
  </div>
 </div>

 <!-- splitter + log -->
 <div class="h-[19px] shrink-0 border-t-[2px] border-[#c0c0c0] bg-[linear-gradient(#f8f8f8,#e6e6e6)] flex items-center justify-center">
  <span class="w-[6px] h-[8px] rounded-full bg-[#a0a0a0]"></span>
 </div>
 <div class="h-[31px] shrink-0 flex border-t-[2px] border-b-[2px] border-t-[#b4b4b4] border-b-[#c8c8c8] bg-[linear-gradient(#ffffff,#f5f5f5_50%,#e8e8e8_50%,#ededed)]">
  <div class="flex-1 flex items-center pl-[8px]">Log</div>
  <div class="w-[200px] shrink-0 border-l-[2px] border-[#c8c8c8] flex items-center pl-[4px]">Duration</div>
 </div>
 <div class="h-[294px] shrink-0 flex flex-col relative bg-white">
  <div class="h-[40px] bg-white shrink-0"></div>
  <div class="h-[38px] bg-[#f1f4fa] shrink-0"></div>
  <div class="h-[38px] bg-white shrink-0"></div>
  <div class="h-[38px] bg-[#f1f4fa] shrink-0"></div>
  <div class="h-[38px] bg-white shrink-0"></div>
  <div class="h-[38px] bg-[#f1f4fa] shrink-0"></div>
  <div class="h-[38px] bg-white shrink-0"></div>
  <div class="h-[26px] bg-[#f1f4fa] shrink-0"></div>
  <div class="absolute right-[198px] top-0 bottom-0 w-[2px] bg-[#c8c8c8]"></div>
 </div>
 <div class="h-[40px] shrink-0 flex items-stretch border-t-[2px] border-[#a8a8a8] bg-[linear-gradient(#fcfcfc,#f0f0f0_50%,#e3e3e3_50%,#e3e3e3)]">
  <div class="w-[55px] flex items-center pl-[17px] border-r-[2px] border-[#c8c8c8]">
   <svg class="w-[25px] h-[20px]" viewBox="0 0 25 20"><path d="M0 2h4M0 10h4M0 18h4M8 2h17M8 10h17M8 18h17" stroke="#3f76d6" stroke-width="3"/></svg>
  </div>
  <div class="w-[68px] flex items-center justify-center pl-[4px] border-r-[2px] border-[#c8c8c8]">
   <svg class="w-[25px] h-[20px]" viewBox="0 0 25 20"><rect x="1" y="1" width="23" height="7" rx="3.500" fill="#777"/><rect x="1" y="12" width="23" height="7" rx="3.500" fill="#777"/></svg>
  </div>
  <div class="flex-1"></div>
 </div>
</div>

</div>
</div>
</div>
</body>
</html>
